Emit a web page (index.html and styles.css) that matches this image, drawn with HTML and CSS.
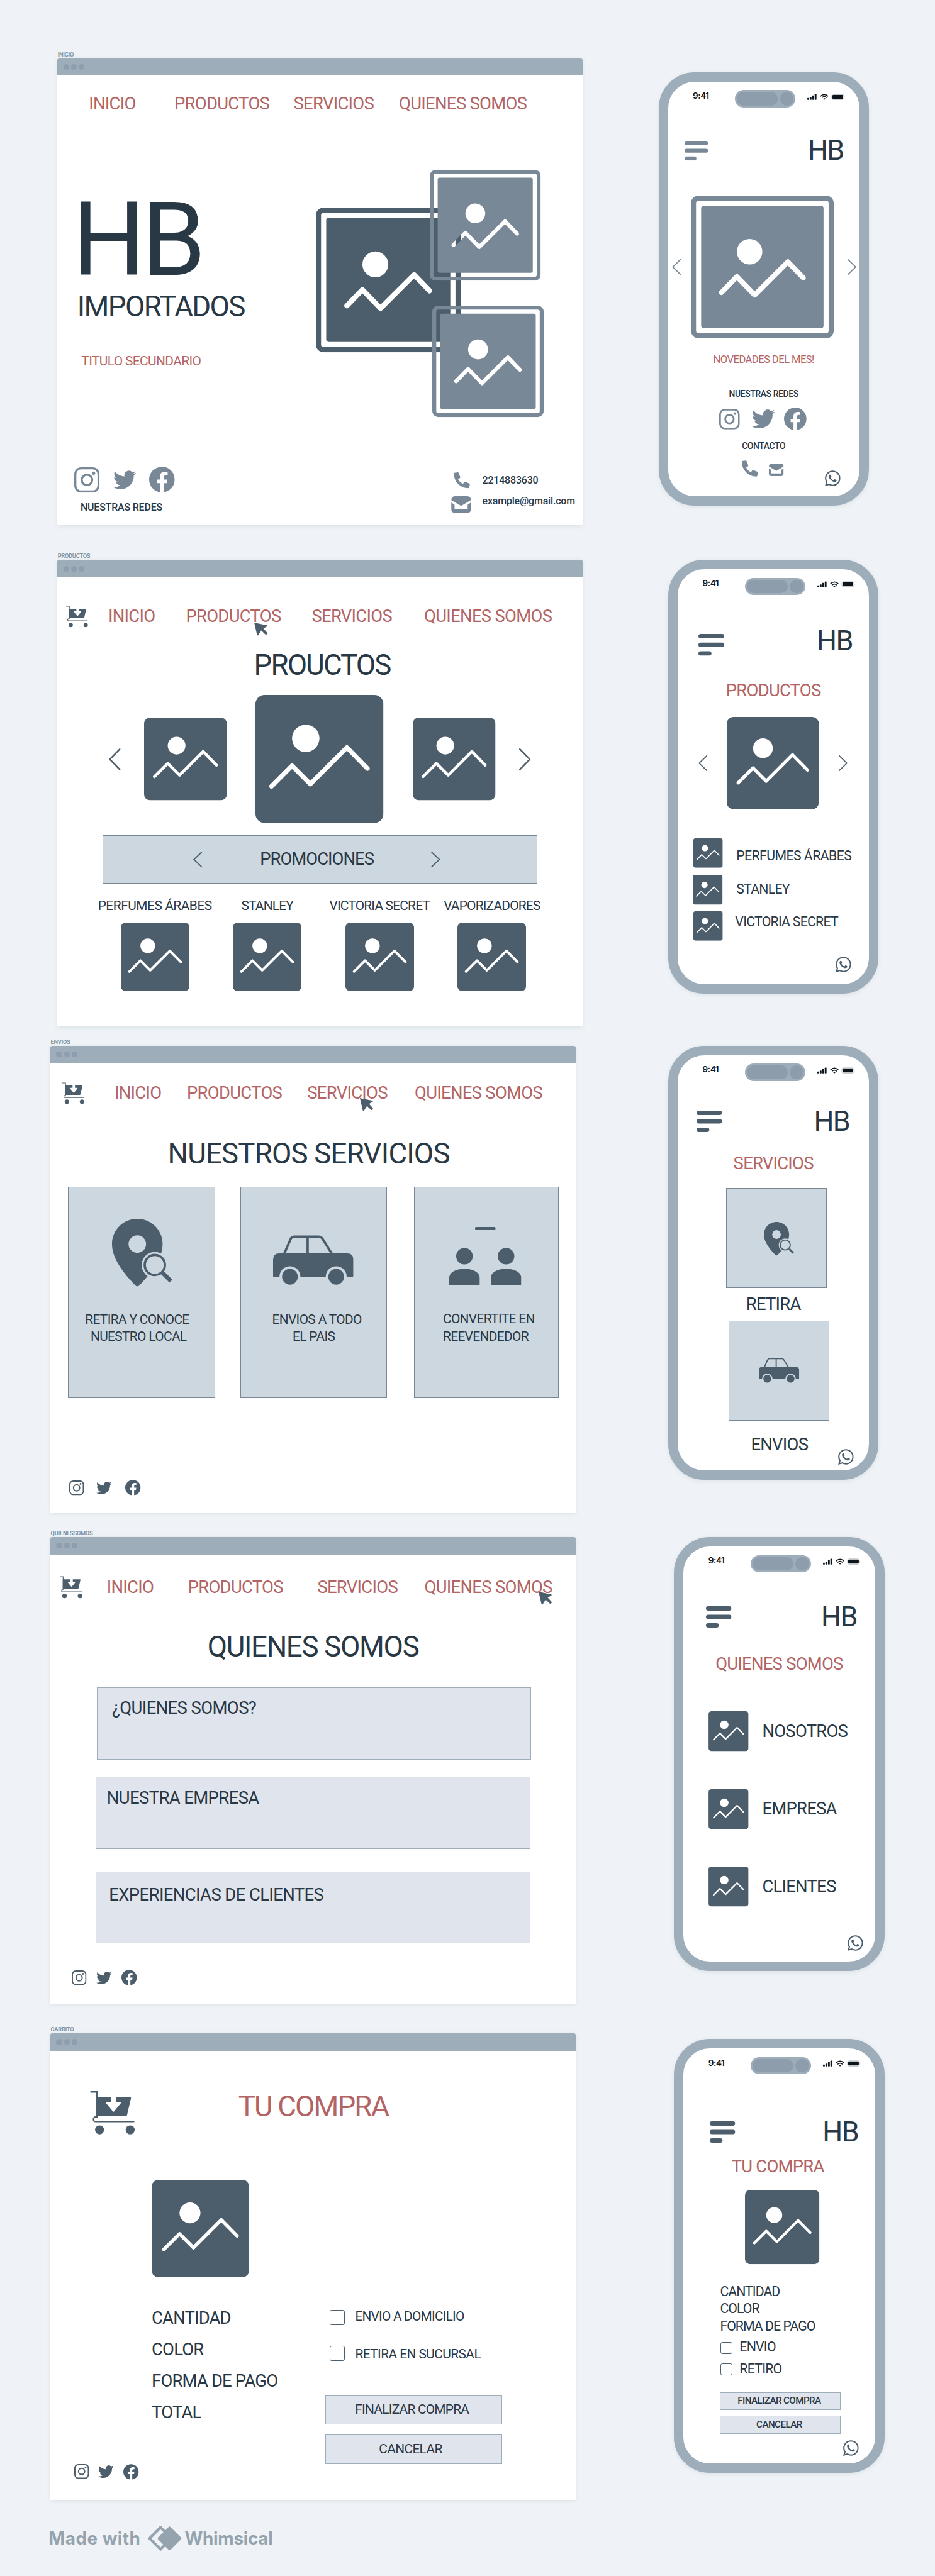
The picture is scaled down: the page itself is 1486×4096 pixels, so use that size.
FILE: index.html
```html
<!DOCTYPE html>
<html lang="es">
<head>
<meta charset="utf-8">
<title>HB Importados - Wireframes</title>
<link rel="stylesheet" href="styles.css">
</head>
<body>
<svg class="defs" aria-hidden="true">
  <defs>
    <mask id="cut" maskUnits="userSpaceOnUse" x="0" y="0" width="28" height="28">
      <rect width="28" height="28" fill="#fff"/>
      <circle cx="11.5" cy="11" r="2.5" fill="#000"/>
      <path d="M6 19l3-3.1 3.5 3.6L19 13l3 3.1" fill="none" stroke="#000" stroke-linecap="round" stroke-linejoin="round"/>
    </mask>
  </defs>
  <symbol id="framed" viewBox="0 0 28 28">
    <rect x=".5" y=".5" width="27" height="27" rx="1" fill="none" stroke="currentColor"/>
    <rect x="2" y="2" width="24" height="24" rx=".5" fill="currentColor" mask="url(#cut)"/>
  </symbol>
  <symbol id="image" viewBox="0 0 28 28">
    <rect width="28" height="28" rx="2" fill="currentColor"/>
    <circle cx="11" cy="9.5" r="3" fill="#fff"/>
    <path d="M3.5 20L8 15.5l4 4 8-8 4.5 4.6" fill="none" stroke="#fff" stroke-linecap="round" stroke-linejoin="round"/>
  </symbol>
  <symbol id="prev" viewBox="0 0 24 45" preserveAspectRatio="none"><path d="M22.5 1.5L2 22.5l20.500 21" fill="none" stroke="currentColor" stroke-width="3.1" stroke-linecap="round" stroke-linejoin="round"/></symbol>
  <symbol id="next" viewBox="0 0 24 45" preserveAspectRatio="none"><path d="M1.500 1.500L22 22.500l-20.500 21" fill="none" stroke="currentColor" stroke-width="3.1" stroke-linecap="round" stroke-linejoin="round"/></symbol>
  <symbol id="instagram" viewBox="0 0 24 24">
    <rect x="1" y="1" width="22" height="22" rx="5.5" fill="none" stroke="currentColor" stroke-width="2"/>
    <circle cx="12" cy="12" r="5" fill="none" stroke="currentColor" stroke-width="2.100"/>
    <circle cx="18.400" cy="5.600" r="1.500" fill="currentColor"/>
  </symbol>
  <symbol id="twitter" viewBox="0 2.100 24 19.700"><path fill="currentColor" d="M23.953 4.57a10 10 0 01-2.825.775 4.958 4.958 0 002.163-2.723c-.951.555-2.005.959-3.127 1.184a4.92 4.92 0 00-8.384 4.482C7.69 8.095 4.067 6.13 1.64 3.162a4.822 4.822 0 00-.666 2.475c0 1.71.87 3.213 2.188 4.096a4.904 4.904 0 01-2.228-.616v.06a4.923 4.923 0 003.946 4.827 4.996 4.996 0 01-2.212.085 4.936 4.936 0 004.604 3.417 9.867 9.867 0 01-6.102 2.105c-.39 0-.779-.023-1.17-.067a13.995 13.995 0 007.557 2.209c9.053 0 13.998-7.496 13.998-13.985 0-.21 0-.42-.015-.63A9.935 9.935 0 0024 4.59z"/></symbol>
  <symbol id="facebook" viewBox="0 0 24 24"><path fill="currentColor" d="M24 12.073c0-6.627-5.373-12-12-12s-12 5.373-12 12c0 5.99 4.388 10.954 10.125 11.854v-8.385H7.078v-3.47h3.047V9.43c0-3.007 1.792-4.669 4.533-4.669 1.312 0 2.686.235 2.686.235v2.953H15.83c-1.491 0-1.956.925-1.956 1.874v2.25h3.328l-.532 3.47h-2.796v8.385C19.612 23.027 24 18.062 24 12.073z"/></symbol>
  <symbol id="whatsapp" viewBox="0 0 24 24"><path fill="currentColor" d="M17.472 14.382c-.297-.149-1.758-.867-2.03-.967-.273-.099-.471-.148-.67.15-.197.297-.767.966-.94 1.164-.173.199-.347.223-.644.075-.297-.15-1.255-.463-2.39-1.475-.883-.788-1.48-1.761-1.653-2.059-.173-.297-.018-.458.13-.606.134-.133.298-.347.446-.52.149-.174.198-.298.298-.497.099-.198.05-.371-.025-.52-.075-.149-.669-1.612-.916-2.207-.242-.579-.487-.5-.669-.51-.173-.008-.371-.01-.57-.01-.198 0-.52.074-.792.372-.272.297-1.040 1.016-1.040 2.479 0 1.462 1.065 2.875 1.213 3.074.149.198 2.096 3.200 5.077 4.487.709.306 1.262.489 1.694.625.712.227 1.360.195 1.871.118.571-.085 1.758-.719 2.006-1.413.248-.694.248-1.289.173-1.413-.074-.124-.272-.198-.57-.347m-5.421 7.403h-.004a9.870 9.870 0 01-5.031-1.378l-.361-.214-3.741.982.998-3.648-.235-.374a9.860 9.860 0 01-1.510-5.260c.001-5.450 4.436-9.884 9.888-9.884 2.640 0 5.122 1.030 6.988 2.898a9.825 9.825 0 012.893 6.994c-.003 5.450-4.437 9.884-9.885 9.884m8.413-18.297A11.815 11.815 0 0012.050 0C5.495 0 .16 5.335.157 11.892c0 2.096.547 4.142 1.588 5.945L.057 24l6.305-1.654a11.882 11.882 0 005.683 1.448h.005c6.554 0 11.890-5.335 11.893-11.893a11.821 11.821 0 00-3.480-8.413z"/></symbol>
  <symbol id="call" viewBox="0 0 101 101"><path fill="currentColor" d="M0 8Q0 4 4 3L23 0q5-.5 7 4l10 25q1 4-2 7l-11 8q9 18 29 29l9-11q3-3 7-2l25 10q4 2 3 7l-4 19q-1 4-5 4C40 100 0 58 0 8z"/></symbol>
  <symbol id="mail" viewBox="0 0 121 102"><path fill="currentColor" d="M0 24Q1 0 22 0h77q21 0 22 24L63 58q-2.500 1.500-5 0zM0 39l20 13v29h81V52l20-13v41q0 22-22 22H22Q0 102 0 80z"/></symbol>
  <symbol id="cursor" viewBox="0 0 83 83"><path fill="currentColor" d="M0 0l79 17q4 3 0 6L57 36l23 25q3 5-1 10-5 5-11 1L44 49 26 77q-4 5-8 0z"/></symbol>
  <symbol id="cart" viewBox="0 0 128 125">
    <path d="M2 2.300h17V74h-2.500q-7 1-7 7.300t7 6.200H125" fill="none" stroke="currentColor" stroke-width="4.300" stroke-linecap="round"/>
    <path fill="currentColor" d="M17 17h43v14H48q-4 1-1 5l18 22q2 3 4 0l18-22q3-4-1-5H74V17h41q3 0 2.500 3L106 69q-1 3-4 3H17z"/>
    <circle cx="27" cy="111.500" r="13" fill="currentColor"/><circle cx="115" cy="111.500" r="13" fill="currentColor"/>
  </symbol>
  <symbol id="pin" viewBox="0 0 125 139">
    <path fill="currentColor" fill-rule="evenodd" d="M52 0C23 0 0 23 0 52c0 33 30 66 48 85q4 4 8 0c18-19 48-52 48-85C104 23 81 0 52 0zm0 34a18 18 0 110 36 18 18 0 010-36z"/>
    <circle cx="88" cy="95" r="27" fill="#cdd7e0"/>
    <circle cx="88" cy="95" r="20.700" fill="none" stroke="currentColor" stroke-width="4.800"/>
    <path d="M104 111l17 17" stroke="#4c5d6b" stroke-width="8.500"/>
  </symbol>
  <symbol id="car" viewBox="0 0 165 102">
    <path d="M22 40L36 8q2-5 8-5h49q6 0 9 5l20 32M71 3v36" fill="none" stroke="currentColor" stroke-width="4.800"/>
    <path fill="currentColor" d="M0 50q0-12.500 12.500-12.500h140Q165 37.500 165 50v34q0 2-2 2H2q-2 0-2-2z"/>
    <circle cx="34.600" cy="85.500" r="21.500" fill="#cdd7e0"/><circle cx="129.700" cy="85.500" r="21.500" fill="#cdd7e0"/>
    <circle cx="34.600" cy="85.500" r="16.200" fill="currentColor"/><circle cx="129.700" cy="85.500" r="16.200" fill="currentColor"/>
  </symbol>
  <symbol id="people" viewBox="0 0 148 120">
    <path fill="currentColor" d="M55 0h38q2 0 2 2v2q0 2-2 2H55q-2 0-2-2V2q0-2 2-2zM0 103C3 80.500 59.500 80.500 62.500 103v15q0 2-2 2H2q-2 0-2-2zM85.500 103c3-22.500 59.500-22.500 62.500 0v15q0 2-2 2H87.500q-2 0-2-2z"/>
    <circle cx="31.200" cy="60" r="17" fill="currentColor"/><circle cx="116.700" cy="60" r="17" fill="currentColor"/>
  </symbol>
  <symbol id="menu" viewBox="0 0 53.300 44.600">
    <rect width="53.300" height="9.200" rx="4.600" fill="currentColor"/><rect y="17.700" width="53.300" height="9.200" rx="4.600" fill="currentColor"/><rect y="35.400" width="26.800" height="9.200" rx="4.600" fill="currentColor"/>
  </symbol>
  <symbol id="signals" viewBox="0 0 78 13">
    <g fill="#0d151c"><rect y="8.700" width="3.700" height="3.800" rx="1"/><rect x="5" y="6.700" width="3.700" height="5.800" rx="1"/><rect x="10.200" y="3.500" width="3.700" height="9" rx="1"/><rect x="15.200" y=".5" width="3.700" height="12" rx="1"/><rect x="51.600" y="2.400" width="22" height="8.400" rx="2"/></g>
    <g fill="none" stroke="#0d151c" stroke-width="2.100"><path d="M27 5.200q8-7 16 0M30 8.200q5-4.200 10 0"/></g>
    <path d="M32.500 10.300q2.500-2 5 0L35 12.600z" fill="#0d151c"/>
    <rect x="50.200" y=".9" width="24.800" height="11.400" rx="3.500" fill="none" stroke="#b4b6b8" stroke-width=".9"/><path d="M76 4.600q2.200 2 0 4z" fill="#b4b6b8"/>
  </symbol>
</svg>

<main class="board">
  <div class="desktops">
    <section class="window window-inicio">
      <h2 class="window-label">INICIO</h2>
      <div class="window-frame">
        <div class="window-bar"><i></i><i></i><i></i></div>
        <div class="window-body">
          <nav class="nav"><a>INICIO</a><a>PRODUCTOS</a><a>SERVICIOS</a><a>QUIENES SOMOS</a></nav>
          <div class="hero">
            <div class="hero-text">
              <div class="hero-logo">HB</div>
              <div class="hero-name title">IMPORTADOS</div>
              <div class="hero-sub text-sm red">TITULO SECUNDARIO</div>
            </div>
            <div class="collage">
              <svg class="collage-main"><use href="#framed"/></svg>
              <svg class="collage-top"><use href="#framed"/></svg>
              <svg class="collage-bottom"><use href="#framed"/></svg>
            </div>
          </div>
          <footer class="home-footer">
            <div>
              <div class="social social-big"><svg class="ig"><use href="#instagram"/></svg><svg class="tw"><use href="#twitter"/></svg><svg class="fb"><use href="#facebook"/></svg></div>
              <div class="text-xs redes">NUESTRAS REDES</div>
            </div>
            <div class="contact">
              <div class="contact-row contact-phone"><svg><use href="#call"/></svg><span class="text-xs digits">2214883630</span></div>
              <div class="contact-row contact-mail"><svg><use href="#mail"/></svg><span class="text-xs mail-text">example@gmail.com</span></div>
            </div>
          </footer>
        </div>
      </div>
    </section>

    <section class="window window-productos">
      <h2 class="window-label">PRODUCTOS</h2>
      <div class="window-frame">
        <div class="window-bar"><i></i><i></i><i></i></div>
        <div class="window-body">
          <nav class="nav"><svg class="cart"><use href="#cart"/></svg><a>INICIO</a><a>PRODUCTOS</a><a>SERVICIOS</a><a>QUIENES SOMOS</a></nav>
          <svg class="cursor"><use href="#cursor"/></svg>
          <h1 class="title">PROUCTOS</h1>
          <div class="carousel"><svg class="chev"><use href="#prev"/></svg><svg class="side"><use href="#image"/></svg><svg class="center"><use href="#image"/></svg><svg class="side"><use href="#image"/></svg><svg class="chev"><use href="#next"/></svg></div>
          <div class="promo"><svg><use href="#prev"/></svg><span class="text-md">PROMOCIONES</span><svg><use href="#next"/></svg></div>
          <div class="categories">
            <div><span class="text-sm category-wide">PERFUMES ÁRABES</span><svg><use href="#image"/></svg></div>
            <div><span class="text-sm">STANLEY</span><svg><use href="#image"/></svg></div>
            <div><span class="text-sm">VICTORIA SECRET</span><svg><use href="#image"/></svg></div>
            <div><span class="text-sm">VAPORIZADORES</span><svg><use href="#image"/></svg></div>
          </div>
        </div>
      </div>
    </section>

    <section class="window window-envios">
      <h2 class="window-label">ENVIOS</h2>
      <div class="window-frame">
        <div class="window-bar"><i></i><i></i><i></i></div>
        <div class="window-body">
          <nav class="nav"><svg class="cart"><use href="#cart"/></svg><a>INICIO</a><a>PRODUCTOS</a><a>SERVICIOS</a><a>QUIENES SOMOS</a></nav>
          <svg class="cursor"><use href="#cursor"/></svg>
          <h1 class="title">NUESTROS SERVICIOS</h1>
          <div class="services">
            <div class="service service-pickup"><svg><use href="#pin"/></svg><p class="text-sm">RETIRA Y CONOCE<br><span class="nudge">NUESTRO LOCAL</span></p></div>
            <div class="service service-delivery"><svg><use href="#car"/></svg><p class="text-sm">ENVIOS A TODO<br><span class="nudge-back">EL PAIS</span></p></div>
            <div class="service service-resell"><svg><use href="#people"/></svg><p class="text-sm">CONVERTITE EN<br>REEVENDEDOR</p></div>
          </div>
          <div class="social"><svg class="ig"><use href="#instagram"/></svg><svg class="tw"><use href="#twitter"/></svg><svg class="fb"><use href="#facebook"/></svg></div>
        </div>
      </div>
    </section>

    <section class="window window-quienes">
      <h2 class="window-label">QUIENESSOMOS</h2>
      <div class="window-frame">
        <div class="window-bar"><i></i><i></i><i></i></div>
        <div class="window-body">
          <nav class="nav"><svg class="cart"><use href="#cart"/></svg><a>INICIO</a><a>PRODUCTOS</a><a>SERVICIOS</a><a>QUIENES SOMOS</a></nav>
          <svg class="cursor"><use href="#cursor"/></svg>
          <h1 class="title">QUIENES SOMOS</h1>
          <div class="panel panel-who text-md">¿QUIENES SOMOS?</div>
          <div class="panel panel-company text-md">NUESTRA EMPRESA</div>
          <div class="panel panel-clients text-md">EXPERIENCIAS DE CLIENTES</div>
          <div class="social"><svg class="ig"><use href="#instagram"/></svg><svg class="tw"><use href="#twitter"/></svg><svg class="fb"><use href="#facebook"/></svg></div>
        </div>
      </div>
    </section>

    <section class="window window-carrito">
      <h2 class="window-label">CARRITO</h2>
      <div class="window-frame">
        <div class="window-bar"><i></i><i></i><i></i></div>
        <div class="window-body">
          <div class="cart-head"><svg><use href="#cart"/></svg><h1 class="title red">TU COMPRA</h1></div>
          <svg class="cart-image"><use href="#image"/></svg>
          <div class="order">
            <div class="order-list text-md"><span>CANTIDAD</span><span>COLOR</span><span>FORMA DE PAGO</span><span>TOTAL</span></div>
            <div class="order-form">
              <label class="check check-send text-sm"><i></i><span>ENVIO A DOMICILIO</span></label>
              <label class="check check-pick text-sm"><i></i><span>RETIRA EN SUCURSAL</span></label>
              <button class="btn btn-first text-sm">FINALIZAR COMPRA</button>
              <button class="btn btn-cancel text-sm">CANCELAR</button>
            </div>
          </div>
          <div class="social"><svg class="ig"><use href="#instagram"/></svg><svg class="tw"><use href="#twitter"/></svg><svg class="fb"><use href="#facebook"/></svg></div>
        </div>
      </div>
    </section>

    <div class="made-with"><span class="made">Made with</span><svg viewBox="0 0 70 52"><path d="M26 3.500L3.500 26 26 48.500" fill="none" stroke="currentColor" stroke-width="5.500" stroke-linejoin="round" stroke-linecap="round"/><path d="M26 3.500l7 7M26 48.500l7-7" stroke="currentColor" stroke-width="5.500" stroke-linecap="round"/><rect x="26.500" y="8" width="36" height="36" rx="3" transform="rotate(45 44.500 26)" fill="currentColor"/></svg><span class="whim">Whimsical</span></div>
  </div>

  <div class="phones">
    <section class="phone phone-inicio">
      <div class="status"><b>9:41</b><div class="island"><i></i><i></i></div><svg><use href="#signals"/></svg></div>
      <header class="phone-head"><svg><use href="#menu"/></svg><span>HB</span></header>
      <div class="phone-carousel"><svg class="chev"><use href="#prev"/></svg><svg class="pic"><use href="#framed"/></svg><svg class="chev"><use href="#next"/></svg></div>
      <div class="news red">NOVEDADES DEL MES!</div>
      <div class="phone-small redes">NUESTRAS REDES</div>
      <div class="social"><svg class="ig"><use href="#instagram"/></svg><svg class="tw"><use href="#twitter"/></svg><svg class="fb"><use href="#facebook"/></svg></div>
      <div class="phone-small contacto">CONTACTO</div>
      <div class="phone-contact"><svg class="call"><use href="#call"/></svg><svg class="mail"><use href="#mail"/></svg></div>
      <svg class="wa"><use href="#whatsapp"/></svg>
    </section>

    <section class="phone phone-productos">
      <div class="status"><b>9:41</b><div class="island"><i></i><i></i></div><svg><use href="#signals"/></svg></div>
      <header class="phone-head"><svg><use href="#menu"/></svg><span>HB</span></header>
      <h3 class="text-md red">PRODUCTOS</h3>
      <div class="phone-carousel"><svg class="chev"><use href="#prev"/></svg><svg class="pic"><use href="#image"/></svg><svg class="chev"><use href="#next"/></svg></div>
      <ul class="thumbs">
        <li class="thumb-a"><svg><use href="#image"/></svg><span class="phone-text">PERFUMES ÁRABES</span></li>
        <li class="thumb-b"><svg><use href="#image"/></svg><span class="phone-text">STANLEY</span></li>
        <li class="thumb-c"><svg><use href="#image"/></svg><span class="phone-text">VICTORIA SECRET</span></li>
      </ul>
      <svg class="wa"><use href="#whatsapp"/></svg>
    </section>

    <section class="phone phone-servicios">
      <div class="status"><b>9:41</b><div class="island"><i></i><i></i></div><svg><use href="#signals"/></svg></div>
      <header class="phone-head"><svg><use href="#menu"/></svg><span>HB</span></header>
      <h3 class="text-md red">SERVICIOS</h3>
      <div class="tile tile-pin"><svg><use href="#pin"/></svg></div>
      <div class="tile-name text-md">RETIRA</div>
      <div class="tile tile-car"><svg><use href="#car"/></svg></div>
      <div class="tile-name tile-name-car text-md">ENVIOS</div>
      <svg class="wa"><use href="#whatsapp"/></svg>
    </section>

    <section class="phone phone-quienes">
      <div class="status"><b>9:41</b><div class="island"><i></i><i></i></div><svg><use href="#signals"/></svg></div>
      <header class="phone-head"><svg><use href="#menu"/></svg><span>HB</span></header>
      <h3 class="text-md red">QUIENES SOMOS</h3>
      <ul class="about">
        <li><svg><use href="#image"/></svg><span class="text-md">NOSOTROS</span></li>
        <li><svg><use href="#image"/></svg><span class="text-md">EMPRESA</span></li>
        <li><svg><use href="#image"/></svg><span class="text-md">CLIENTES</span></li>
      </ul>
      <svg class="wa"><use href="#whatsapp"/></svg>
    </section>

    <section class="phone phone-carrito">
      <div class="status"><b>9:41</b><div class="island"><i></i><i></i></div><svg><use href="#signals"/></svg></div>
      <header class="phone-head"><svg><use href="#menu"/></svg><span>HB</span></header>
      <h3 class="text-md red">TU COMPRA</h3>
      <svg class="cart-image"><use href="#image"/></svg>
      <div class="phone-order phone-text"><span>CANTIDAD</span><span>COLOR</span><span>FORMA DE PAGO</span></div>
      <div class="phone-checks phone-text"><label class="check"><i></i><span>ENVIO</span></label><label class="check"><i></i><span>RETIRO</span></label></div>
      <div class="phone-buttons"><button class="btn">FINALIZAR COMPRA</button><button class="btn">CANCELAR</button></div>
      <svg class="wa"><use href="#whatsapp"/></svg>
    </section>
  </div>
</main>
</body>
</html>
```
FILE: styles.css
```css
/* 1rem = 10 canvas units; the board is 192.1 x 529.5 units of rem */
html { font-size: 7.73555px; }
* { box-sizing: border-box; }
body { margin: 0; background: #eff3f7; font-family: Roboto, "Liberation Sans", sans-serif; color: #293845; }
h1, h2, h3, p, ul { margin: 0; padding: 0; font-weight: 400; list-style: none; }
svg { display: block; flex: none; color: #4c5d6b; overflow: visible; }
span { white-space: nowrap; }
.defs { position: absolute; width: 0; height: 0; }
.board { display: grid; grid-template-columns: 133rem 1fr; width: 192.1rem; height: 529.5rem; overflow: hidden; }

/* type */
.title { font-size: 5.9rem; line-height: 7rem; letter-spacing: -.041em; text-align: center; white-space: nowrap; }
.text-md { font-size: 3.55rem; line-height: 4.4rem; letter-spacing: -.022em; white-space: nowrap; }
.text-sm { font-size: 2.7rem; line-height: 3.2rem; letter-spacing: -.031em; white-space: nowrap; }
.text-xs { font-size: 2.06rem; line-height: 2.4rem; letter-spacing: -.01em; font-weight: 500; white-space: nowrap; }
.phone-text { font-size: 2.75rem; line-height: 3.4rem; letter-spacing: -.035em; }
.phone-small { font-size: 1.8rem; line-height: 2.2rem; letter-spacing: -.027em; font-weight: 500; text-align: center; }
.red { color: #b36464; }

/* browser windows */
.desktops, .phones { display: flow-root; }
.window { width: 107.9rem; margin-left: 10.37rem; }
.window-inicio { margin: 10.57rem 0 0 11.8rem; }
.window-productos { margin: 5.77rem 0 0 11.8rem; }
.window-envios { margin-top: 2.57rem; }
.window-quienes { margin-top: 3.63rem; }
.window-carrito { margin-top: 4.7rem; }
.window-label { font-size: 1.2rem; line-height: 1.2rem; font-weight: 700; letter-spacing: -.03em; color: #8393a1; margin-bottom: .23rem; padding-left: .05rem; }
.window-frame { height: 95.9rem; background: #fff; border-radius: .4rem .4rem 0 0; box-shadow: 0 .2rem .8rem rgba(60, 80, 100, .1); }
.window-bar { display: flex; align-items: center; gap: .42rem; height: 3.57rem; padding-left: 1.2rem; background: #9eadba; border-radius: .4rem .4rem 0 0; }
.window-bar i { width: 1.18rem; height: 1.18rem; border-radius: 50%; background: #8f9eae; }
.window-body { position: relative; display: flow-root; }

.nav { display: grid; align-items: center; height: 4.4rem; color: #b36464; font-size: 3.55rem; line-height: 4.4rem; letter-spacing: -.026em; white-space: nowrap; }
.cursor { position: absolute; width: 2.75rem; height: 2.75rem; }
.social { display: flex; align-items: center; height: 3.2rem; }
.social .ig { width: 3.03rem; height: 3.03rem; }
.social .tw { width: 3.17rem; height: 2.6rem; }
.social .fb { width: 3.17rem; height: 3.2rem; }

/* inicio */
.window-inicio .nav { margin: 3.57rem 0 0 6.46rem; grid-template-columns: 17.55rem 24.5rem 21.66rem auto; }
.hero { display: grid; grid-template-columns: 53.12rem 46.8rem; height: 50.76rem; margin-top: 11.39rem; }
.hero-logo { margin: 5.44rem 0 0 3.02rem; font-size: 21.1rem; line-height: 18rem; letter-spacing: -.035em; }
.hero-name { margin: 1.18rem 0 0 4.08rem; text-align: left; letter-spacing: -.036em; }
.hero-sub { margin: 6.09rem 0 0 4.92rem; letter-spacing: -.029em; }
.collage { position: relative; }
.collage svg { position: absolute; }
.collage-main { left: 0; top: 7.71rem; width: 29.75rem; height: 29.75rem; }
.collage-top { left: 23.43rem; top: 0; width: 22.8rem; height: 22.8rem; color: #798897; }
.collage-bottom { left: 23.86rem; top: 27.87rem; width: 22.9rem; height: 22.9rem; color: #798897; }
.home-footer { display: grid; grid-template-columns: 80.87rem auto; margin-top: 10.27rem; }
.home-footer svg { color: #798897; }
.social-big { height: 5.4rem; padding-left: 3.4rem; }
.social-big .ig { width: 5.2rem; height: 5.2rem; }
.social-big .tw { width: 4.7rem; height: 3.9rem; margin: 0 2.6rem 0 2.88rem; }
.social-big .fb { width: 5.26rem; height: 5.26rem; margin-top: -.2rem; }
.window-inicio .redes { margin: 1.75rem 0 0 4.74rem; }
.contact { margin-top: 1.15rem; }
.contact-row { display: grid; grid-template-columns: 6.43rem auto; align-items: center; }
.contact-phone { height: 3.31rem; }
.contact-phone svg { width: 3.4rem; height: 3.31rem; margin-left: .6rem; }
.contact-mail { height: 3.4rem; margin-top: 1.65rem; align-items: start; }
.contact-mail svg { width: 4.1rem; height: 3.4rem; }
.mail-text { margin-top: -.2rem; }

/* productos */
.window-productos .nav { margin: 5.83rem 0 0 1.8rem; grid-template-columns: 8.63rem 15.96rem 25.86rem 23.1rem auto; }
.cart { width: 4.5rem; height: 4.5rem; }
.window-productos .cursor { left: 40.37rem; top: 9.3rem; }
.window-productos .title { margin-top: 4.37rem; padding-left: .9rem; }
.carousel { display: flex; align-items: center; height: 26.2rem; margin: 2.7rem 0 0 10.6rem; }
.carousel .chev { width: 2.4rem; height: 4.5rem; }
.carousel .side { width: 17rem; height: 17rem; margin: 0 4.8rem; }
.carousel .center { width: 26.3rem; height: 26.3rem; margin: 0 1.15rem; }
.promo { display: flex; align-items: center; justify-content: space-between; width: 89.3rem; height: 9.95rem; margin: 2.5rem 0 0 9.3rem; padding: 0 19.8rem 0 18.5rem; background: #cdd7e0; border: .2rem solid #798897; }
.promo svg { width: 1.88rem; height: 3.26rem; }
.promo span { letter-spacing: -.036em; }
.categories { display: grid; grid-template-columns: repeat(4, 23.08rem); margin: 2.99rem 0 0 8.49rem; }
.categories div { display: flex; flex-direction: column; align-items: center; gap: 1.91rem; }
.categories svg { width: 14.1rem; height: 14.1rem; }
.categories span { letter-spacing: -.038em; }
.categories .category-wide { letter-spacing: -.022em; }

/* envios */
.window-envios .nav { margin: 3.92rem 0 0 2.45rem; grid-template-columns: 10.71rem 14.87rem 24.72rem 22.08rem auto; }
.window-envios .cursor { left: 63.63rem; top: 7.18rem; }
.window-envios .title { margin-top: 6.84rem; padding-right: 1.8rem; letter-spacing: -.018em; }
.services { display: flex; height: 43.5rem; margin: 3.19rem 0 0 3.6rem; }
.service { background: #cdd7e0; border: .2rem solid #798897; text-align: center; }
.service p { line-height: 3.57rem; }
.service-pickup { width: 30.2rem; margin-right: 5.19rem; }
.service-pickup svg { width: 12.5rem; height: 13.9rem; margin: 6.55rem 0 4.99rem 8.96rem; }
.service-pickup p { padding-right: 1.8rem; }
.nudge { padding-left: .6rem; }
.service-delivery { width: 30.1rem; margin-right: 5.62rem; }
.service-delivery svg { width: 16.5rem; height: 10.2rem; margin: 9.8rem 0 5.44rem 6.57rem; }
.service-delivery p { padding-left: 1.4rem; }
.nudge-back { padding-right: 1.3rem; }
.service-resell { width: 29.76rem; }
.service-resell svg { width: 14.8rem; height: 12rem; margin: 8.15rem 0 5.29rem 7.15rem; }
.service-resell p { text-align: left; padding-left: 5.8rem; }
.window-envios .social { margin: 16.83rem 0 0 3.82rem; }
.window-envios .tw { margin: 0 2.74rem 0 2.59rem; }

/* quienes somos */
.window-quienes .nav { margin: 4.41rem 0 0 1.93rem; grid-template-columns: 9.64rem 16.67rem 26.6rem 22rem auto; }
.window-quienes .cart { width: 4.63rem; height: 4.66rem; }
.window-quienes .cursor { left: 100.32rem; top: 7.67rem; }
.window-quienes .title { margin-top: 6.8rem; letter-spacing: -.029em; }
.panel { width: 89.3rem; height: 14.8rem; margin-left: 9.3rem; background: #e0e4ec; border: .2rem solid #9eadba; }
.panel-who { height: 14.86rem; margin: 4.72rem 0 0 9.5rem; padding: 1.94rem 0 0 3rem; }
.panel-company { margin-top: 3.51rem; padding: 2rem 0 0 2.15rem; }
.panel-clients { margin-top: 4.65rem; padding: 2.58rem 0 0 2.6rem; }
.window-quienes .social { margin: 5.48rem 0 0 4.4rem; }
.window-quienes .tw { margin: 0 2.03rem 0 2rem; }

/* carrito */
.cart-head { display: flex; align-items: flex-start; height: 9.19rem; margin: 8.03rem 0 0 8.07rem; }
.cart-head svg { width: 9.23rem; height: 8.93rem; margin-top: .26rem; }
.cart-head .title { margin-left: 21.28rem; }
.window-carrito .cart-image { width: 20.05rem; height: 20.05rem; margin: 9.35rem 0 0 20.83rem; }
.order { display: grid; grid-template-columns: 35.63rem 37rem; height: 33.24rem; margin: 5.06rem 0 0 20.8rem; }
.order-list { display: flex; flex-direction: column; line-height: 6.48rem; letter-spacing: -.031em; }
.order-form { padding-top: 1.67rem; }
.check { display: flex; align-items: center; }
.check i { width: 3.1rem; height: 3.1rem; border: .25rem solid #4c5d6b; border-radius: .4rem; }
.check span { margin-left: 2.14rem; }
.order-form .check { padding-left: .93rem; }
.check-send { height: 3.1rem; letter-spacing: -.038em; }
.check-pick { height: 3.1rem; margin-top: 4.17rem; letter-spacing: -.027em; }
.check-send span { margin-top: -.5rem; }
.check-pick span { margin-top: .36rem; }
.btn { display: block; width: 36.4rem; height: 6.07rem; padding: 0 .7rem 0 0; font-family: inherit; color: inherit; background: #e0e4ec; border: .2rem solid #9eadba; }
.btn-first { margin-top: 7.06rem; letter-spacing: -.036em; }
.btn-cancel { margin-top: 2.07rem; padding-right: 1.3rem; }
.window-carrito .social { margin-left: 4.83rem; }
.window-carrito .tw { margin: 0 1.95rem 0 1.94rem; }

.made-with { display: flex; align-items: center; height: 5.22rem; margin: 5.24rem 0 0 10rem; font-family: Inter, "Liberation Sans", sans-serif; font-size: 3.6rem; font-weight: 700; color: #95a3af; }
.made-with svg { width: 7rem; height: 5.22rem; color: #95a3af; }
.made { width: 20.33rem; letter-spacing: .018em; }
.whim { margin-left: .6rem; letter-spacing: -.01em; }

/* phones */
.phone { position: relative; width: 43.2rem; height: 89.13rem; border: 2rem solid #9eadba; border-radius: 7.4rem; background: #fff; box-shadow: 0 .2rem .8rem rgba(60, 80, 100, .1); }
.phone-inicio { margin: 14.82rem 0 0 2.3rem; }
.phone-productos { margin: 11.15rem 0 0 4.3rem; }
.phone-servicios { margin: 10.77rem 0 0 4.3rem; }
.phone-quienes { margin: 11.87rem 0 0 5.5rem; }
.phone-carrito { margin: 14.04rem 0 0 5.5rem; }
.status { display: grid; grid-template-columns: 8.7rem 14.83rem auto; align-items: start; height: 6rem; padding: 1.7rem 0 0 5.1rem; }
.status b { font: 600 1.75rem/2rem Inter, "Liberation Sans", sans-serif; letter-spacing: -.03em; color: #0d151c; margin-top: .25rem; }
.status svg { width: 7.8rem; height: 1.3rem; margin-top: .75rem; }
.island { display: flex; gap: .4rem; width: 12.4rem; height: 3.6rem; padding: .4rem; border-radius: 1.8rem; background: #9eadba; }
.island i { width: 8.4rem; height: 2.8rem; border-radius: 1.4rem; background: #8d9dac; }
.island i + i { width: 2.8rem; }
.phone-head { display: flex; align-items: center; height: 7rem; }
.phone-head svg { width: 5.23rem; height: 4.4rem; }
.phone-head span { font-size: 5.8rem; line-height: 7rem; letter-spacing: -.035em; padding-left: .15rem; }
.phone h3, .tile-name { text-align: center; letter-spacing: -.028em; }
.phone-carousel { display: flex; align-items: center; }
.phone-carousel .chev { width: 1.83rem; height: 3.23rem; }
.wa { position: absolute; width: 3.2rem; height: 3.25rem; }

.phone-inicio svg:not(.wa) { color: #798897; }
.phone-inicio .phone-head { margin: 4.7rem 0 0 3.4rem; }
.phone-inicio .phone-head svg { width: 4.83rem; height: 4.04rem; }
.phone-inicio .phone-head span { margin-left: 20.36rem; }
.phone-inicio .phone-carousel { margin: 5.76rem 0 0 .8rem; }
.phone-inicio .pic { width: 29.37rem; height: 29.34rem; margin: 0 2.75rem 0 2.1rem; }
.news { margin-top: 2.79rem; font-size: 2.15rem; line-height: 3rem; letter-spacing: -.035em; text-align: center; }
.phone-inicio .redes { margin-top: 4.61rem; }
.phone-inicio .social { height: 4.7rem; margin: 1.6rem 0 0 10.5rem; }
.phone-inicio .ig { width: 4.23rem; height: 4.23rem; }
.phone-inicio .tw { width: 4.73rem; height: 3.9rem; margin: 0 1.9rem 0 2.54rem; }
.phone-inicio .fb { width: 4.63rem; height: 4.63rem; }
.contacto { margin-top: 2.13rem; }
.phone-contact { display: flex; align-items: center; height: 3.4rem; margin: 1.83rem 0 0 15.17rem; }
.call { width: 3.33rem; height: 3.4rem; }
.mail { width: 3.03rem; height: 2.6rem; margin: .5rem 0 0 2.3rem; }
.phone-inicio .wa { left: 32.3rem; top: 79.9rem; }

.phone-productos .phone-head { margin: 5.18rem 0 0 4.3rem; }
.phone-productos .phone-head svg { width: 5.33rem; height: 4.46rem; margin-top: 1.76rem; }
.phone-productos .phone-head span { margin-left: 18.79rem; }
.phone-productos h3 { margin-top: 4.57rem; }
.phone-productos .phone-carousel { margin: 3.25rem 0 0 4.3rem; }
.phone-productos .pic { width: 18.93rem; height: 18.95rem; margin: 0 4.04rem 0 4rem; }
.thumbs { display: flex; flex-direction: column; gap: 1.53rem; margin: 5.93rem 0 0 3.2rem; }
.thumbs li { display: flex; align-items: center; height: 6rem; }
.thumbs svg { width: 6.03rem; height: 6.03rem; margin-right: 2.8rem; }
.thumb-a span { margin-top: 1.28rem; letter-spacing: -.026em; }
.thumb-b svg { width: 6.13rem; height: 6.13rem; margin-left: -.1rem; }
.thumb-c span { margin: -1.64rem 0 0 -.23rem; }
.phone-productos .wa { left: 32.4rem; top: 79.63rem; }

.phone-servicios .phone-head { margin: 4.1rem 0 0 3.9rem; }
.phone-servicios .phone-head span { margin-left: 18.69rem; }
.phone-servicios h3 { margin-top: 2.93rem; }
.tile { display: flex; align-items: center; justify-content: center; width: 20.7rem; height: 20.5rem; background: #cdd7e0; border: .2rem solid #798897; }
.tile-pin { margin: 2.85rem 0 1.18rem 9.9rem; }
.tile-pin svg { width: 6.25rem; height: 6.93rem; margin: .4rem 0 0 1.2rem; }
.tile-car { margin: 1.2rem 0 2.73rem 10.5rem; }
.tile-car svg { width: 8.3rem; height: 5.15rem; }
.tile-name-car { padding-left: 2.5rem; }
.phone-servicios .wa { left: 32.9rem; top: 80.85rem; }

.phone-quienes .phone-head { margin: 4.93rem 0 0 4.6rem; }
.phone-quienes .phone-head span { margin-left: 18.29rem; }
.phone-quienes h3 { margin-top: 3.97rem; }
.about { display: flex; flex-direction: column; gap: 7.8rem; margin: 7.5rem 0 0 5.17rem; }
.about li { display: flex; align-items: center; height: 8.2rem; }
.about svg { width: 8.23rem; height: 8.2rem; margin-right: 2.77rem; }
.about span { letter-spacing: -.028em; }
.phone-quienes .wa { left: 33.7rem; top: 79.9rem; }

.phone-carrito .phone-head { margin: 7.63rem 0 0 5.4rem; }
.phone-carrito .phone-head span { margin-left: 17.79rem; }
.phone-carrito h3 { margin-top: 1.4rem; padding-right: .6rem; }
.phone-carrito .cart-image { width: 15.3rem; height: 15.3rem; margin: 2.56rem 0 0 12.6rem; }
.phone-order { display: flex; flex-direction: column; line-height: 3.55rem; margin: 3.87rem 0 0 7.5rem; letter-spacing: -.045em; }
.phone-checks { display: flex; flex-direction: column; gap: 2rem; margin: 1.52rem 0 0 7.6rem; }
.phone-checks .check { height: 2.4rem; }
.phone-checks i { width: 2.4rem; height: 2.4rem; border-width: .16rem; }
.phone-checks span { margin: -.2rem 0 0 1.5rem; }
.phone-buttons { display: flex; flex-direction: column; gap: 1.17rem; margin: 3.47rem 0 0 7.4rem; }
.phone-buttons .btn { width: 24.9rem; height: 3.7rem; padding: 0 .4rem 0 0; font-size: 1.97rem; font-weight: 500; letter-spacing: -.04em; line-height: 3rem; }
.phone-carrito .wa { left: 32.83rem; top: 80.46rem; }
```
